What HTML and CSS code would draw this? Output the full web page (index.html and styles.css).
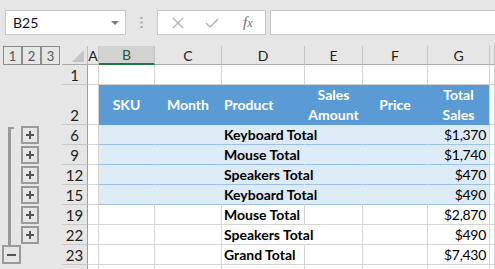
FILE: index.html
```html
<html>
<head>
<title>Subtotals</title>
<link rel="stylesheet" href="styles.css">
</head>
<body>
<div class="app">
    <div class="formula-bar">
        <div class="name-box"><span>B25</span><span class="caret"></span></div>
        <div class="grip">
            <svg width="3" height="11" viewBox="0 0 3 11"><rect x="0.5" y="0" width="2" height="2" fill="#a6a6a6"/><rect x="0.5" y="4.5" width="2" height="2" fill="#a6a6a6"/><rect x="0.5" y="9" width="2" height="2" fill="#a6a6a6"/></svg>
        </div>
        <div class="func-box">
            <svg class="cancel" width="12" height="12" viewBox="0 0 12 12"><path d="M1 1L11 11M11 1L1 11" stroke="#b4b4b4" stroke-width="1.4" fill="none"/></svg>
            <svg class="enter" width="14" height="10" viewBox="0 0 14 10"><path d="M1 5L5 9L13 1" stroke="#b4b4b4" stroke-width="1.5" fill="none"/></svg>
            <span class="fx"><i>f</i><i class="sub">x</i></span>
        </div>
        <div class="formula-input"></div>
    </div>

    <div class="sheet">
        <!-- column headers -->
        <div class="levels"><span>1</span><span>2</span><span>3</span></div>
        <div class="corner"><div class="tri"></div></div>
        <div class="col-head">A</div>
        <div class="col-head sel">B</div>
        <div class="col-head">C</div>
        <div class="col-head">D</div>
        <div class="col-head">E</div>
        <div class="col-head">F</div>
        <div class="col-head">G</div>
        <div class="col-head"></div>

        <!-- row 1 -->
        <div class="gutter"></div>
        <div class="row-head">1</div>
        <div class="cell"></div><div class="cell"></div><div class="cell"></div><div class="cell"></div>
        <div class="cell"></div><div class="cell"></div><div class="cell"></div><div class="cell"></div>

        <!-- row 2: table header -->
        <div class="gutter"></div>
        <div class="row-head">2</div>
        <div class="cell"></div>
        <div class="cell th">SKU</div>
        <div class="cell th">Month</div>
        <div class="cell th left">Product</div>
        <div class="cell th">Sales<br>Amount</div>
        <div class="cell th">Price</div>
        <div class="cell th end">Total<br>Sales</div>
        <div class="cell"></div>

        <!-- row 6 -->
        <div class="gutter line first"><span class="toggle"><svg width="8" height="8" viewBox="0 0 8 8"><path d="M4 0V8M0 4H8" stroke="#555" stroke-width="2"/></svg></span></div>
        <div class="row-head">6</div>
        <div class="cell"></div>
        <div class="cell band"></div><div class="cell band"></div>
        <div class="cell band label">Keyboard Total</div>
        <div class="cell band"></div><div class="cell band"></div>
        <div class="cell band num end">$1,370</div>
        <div class="cell"></div>

        <!-- row 9 -->
        <div class="gutter line"><span class="toggle"><svg width="8" height="8" viewBox="0 0 8 8"><path d="M4 0V8M0 4H8" stroke="#555" stroke-width="2"/></svg></span></div>
        <div class="row-head">9</div>
        <div class="cell"></div>
        <div class="cell band"></div><div class="cell band"></div>
        <div class="cell band label">Mouse Total</div>
        <div class="cell band"></div><div class="cell band"></div>
        <div class="cell band num end">$1,740</div>
        <div class="cell"></div>

        <!-- row 12 -->
        <div class="gutter line"><span class="toggle"><svg width="8" height="8" viewBox="0 0 8 8"><path d="M4 0V8M0 4H8" stroke="#555" stroke-width="2"/></svg></span></div>
        <div class="row-head">12</div>
        <div class="cell"></div>
        <div class="cell band"></div><div class="cell band"></div>
        <div class="cell band label">Speakers Total</div>
        <div class="cell band"></div><div class="cell band"></div>
        <div class="cell band num end">$470</div>
        <div class="cell"></div>

        <!-- row 15 -->
        <div class="gutter line"><span class="toggle"><svg width="8" height="8" viewBox="0 0 8 8"><path d="M4 0V8M0 4H8" stroke="#555" stroke-width="2"/></svg></span></div>
        <div class="row-head">15</div>
        <div class="cell"></div>
        <div class="cell band"></div><div class="cell band"></div>
        <div class="cell band label">Keyboard Total</div>
        <div class="cell band"></div><div class="cell band"></div>
        <div class="cell band num end">$490</div>
        <div class="cell"></div>

        <!-- row 19 -->
        <div class="gutter line"><span class="toggle"><svg width="8" height="8" viewBox="0 0 8 8"><path d="M4 0V8M0 4H8" stroke="#555" stroke-width="2"/></svg></span></div>
        <div class="row-head">19</div>
        <div class="cell"></div><div class="cell"></div><div class="cell"></div>
        <div class="cell label">Mouse Total</div>
        <div class="cell"></div><div class="cell"></div>
        <div class="cell num">$2,870</div>
        <div class="cell"></div>

        <!-- row 22 -->
        <div class="gutter line"><span class="toggle"><svg width="8" height="8" viewBox="0 0 8 8"><path d="M4 0V8M0 4H8" stroke="#555" stroke-width="2"/></svg></span></div>
        <div class="row-head">22</div>
        <div class="cell"></div><div class="cell"></div><div class="cell"></div>
        <div class="cell label over">Speakers Total</div>
        <div class="cell"></div><div class="cell"></div>
        <div class="cell num">$490</div>
        <div class="cell"></div>

        <!-- row 23 -->
        <div class="gutter"><span class="toggle collapse"><svg width="9" height="2" viewBox="0 0 9 2"><path d="M0 1H9" stroke="#555" stroke-width="2"/></svg></span></div>
        <div class="row-head">23</div>
        <div class="cell"></div><div class="cell"></div><div class="cell"></div>
        <div class="cell label">Grand Total</div>
        <div class="cell"></div><div class="cell"></div>
        <div class="cell num">$7,430</div>
        <div class="cell"></div>

        <!-- row 24 (cut off) -->
        <div class="gutter"></div>
        <div class="row-head"></div>
        <div class="cell"></div><div class="cell"></div><div class="cell"></div><div class="cell"></div>
        <div class="cell"></div><div class="cell"></div><div class="cell"></div><div class="cell"></div>
    </div>
</div>
</body>
</html>
```

FILE: styles.css
```css
html, body {
    margin: 0;
    background: #e6e6e6;
    overflow: hidden;
}
* {
    font-family: Lato, "Liberation Sans", sans-serif;
    box-sizing: border-box;
}
.app {
    width: 495px;
    height: 269px;
    overflow: hidden;
}

/* formula bar */
.formula-bar {
    display: flex;
    align-items: center;
    height: 35px;
    padding: 10px 0 0 5px;
}
.name-box {
    width: 121px;
    height: 25px;
    background: #fff;
    border: 1px solid #c6c6c6;
    display: flex;
    align-items: center;
    justify-content: space-between;
    padding: 0 6px 0 7px;
    font-size: 14px;
    color: #111;
}
.caret {
    width: 0;
    height: 0;
    border-left: 4px solid transparent;
    border-right: 4px solid transparent;
    border-top: 4px solid #7a7a7a;
}
.grip {
    width: 31px;
    display: flex;
    justify-content: center;
}
.func-box {
    width: 109px;
    height: 25px;
    background: #fff;
    border: 1px solid #c6c6c6;
    display: flex;
    align-items: center;
    padding-left: 14px;
}
.func-box .enter { margin-left: 21px; }
.fx {
    margin-left: 24px;
    color: #6e6e6e;
    font-size: 15px;
}
.fx i { font-family: "Liberation Serif", serif; }
.fx .sub { font-size: 12px; }
.formula-input {
    flex: 1;
    height: 25px;
    margin: 0 -5px 0 4px;
    background: #fff;
    border: 1px solid #c6c6c6;
}

/* sheet grid */
.sheet {
    margin-top: 11px;
    display: grid;
    grid-template-columns: 62px 26px 11px 56px 67px 83px 58px 65px 62px 1fr;
    grid-template-rows: 19px 20px 40px repeat(8, 20px);
    font-size: 15px;
}
.levels {
    display: flex;
    padding-left: 3px;
}
.levels span {
    width: 19px;
    height: 19px;
    border: 1px solid #8c8c8c;
    color: #555;
    font-size: 13px;
    display: flex;
    align-items: center;
    justify-content: center;
}
.corner {
    border-right: 1px solid #bdbdbd;
    border-bottom: 1px solid #ababab;
    display: flex;
    align-items: flex-end;
    justify-content: flex-end;
    padding: 0 3px 2px 0;
}
.tri {
    width: 12px;
    height: 12px;
    background: #c4c4c4;
    clip-path: polygon(100% 0, 100% 100%, 0 100%);
}
.col-head {
    border-right: 1px solid #c4c4c4;
    border-bottom: 1px solid #ababab;
    display: flex;
    align-items: center;
    justify-content: center;
    color: #222;
    font-size: 14px;
}
.col-head.sel {
    background: #d2d2d2;
    border-bottom: 2px solid #217346;
    color: #1d5e37;
}
.row-head {
    border-right: 1px solid #9e9e9e;
    border-bottom: 1px solid #c8c8c8;
    display: flex;
    align-items: flex-end;
    justify-content: center;
    color: #222;
    line-height: 18px;
}

/* outline gutter */
.gutter.line {
    background: linear-gradient(#999, #999) 8px 0 / 3px 100% no-repeat;
}
.gutter.first {
    background: linear-gradient(#999, #999) 8px 2px / 3px 100% no-repeat,
                linear-gradient(#999, #999) 8px 2px / 6px 2px no-repeat;
}
.toggle {
    display: flex;
    align-items: center;
    justify-content: center;
    width: 18px;
    height: 18px;
    margin: 1px 0 0 21px;
    border: 2px solid #9a9a9a;
}
.toggle.collapse {
    width: 19px;
    height: 19px;
    margin: 0 0 0 2px;
}

/* cells */
.cell {
    background: #fff;
    border-right: 1px solid #d4d4d4;
    border-bottom: 1px solid #d4d4d4;
    display: flex;
    align-items: flex-end;
    padding: 0 2px;
    font-size: 14px;
    line-height: 18px;
    white-space: nowrap;
    color: #000;
}
.th {
    background: #5b9bd5;
    border-right-color: #5b9bd5;
    border-bottom-color: #5b9bd5;
    color: #fff;
    font-weight: bold;
    align-items: center;
    justify-content: center;
    text-align: center;
    line-height: 20px;
}
.th.left { justify-content: flex-start; text-align: left; }
.band {
    background: #ddebf7;
    border-right-color: #ddebf7;
    border-bottom-color: #9bc2e6;
}
.end { border-right-color: #d4d4d4; }
.label {
    font-weight: bold;
    z-index: 1;
}
.label.over { border-right-color: #fff; }
.num {
    justify-content: flex-end;
    padding-right: 3px;
    letter-spacing: -0.3px;
}
```
